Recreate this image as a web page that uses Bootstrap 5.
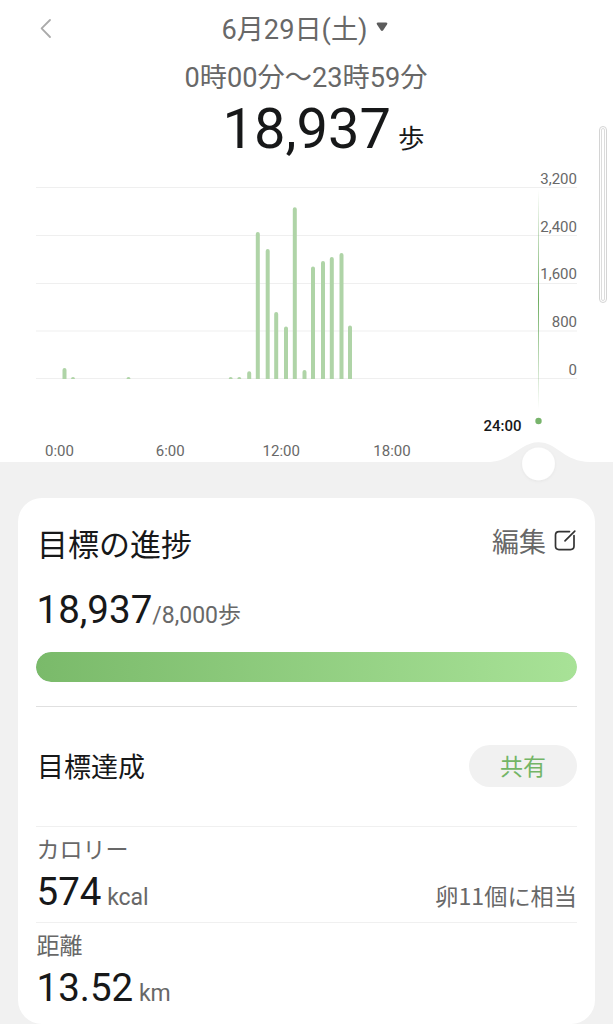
<!DOCTYPE html>
<html lang="ja">
<head>
<meta charset="utf-8">
<meta name="viewport" content="width=device-width, initial-scale=1">
<title>歩数</title>
<link href="https://cdn.jsdelivr.net/npm/bootstrap@5.3.0/dist/css/bootstrap.min.css" rel="stylesheet">
<style>
body{font-family:Roboto,"Noto Sans CJK JP",sans-serif;background:#f1f1f1;color:#171819;height:1024px;overflow:hidden}
.ink-soft{color:#686868}
.date-row{height:58px;font-size:27.2px;line-height:58px;padding-right:4px}
.date-row span{padding-top:1px}
.back-btn{left:39px;top:18px;line-height:0}
.time-row{height:40px;font-size:27.2px;line-height:40px;padding-right:1px}
.total-row{height:62px;font-size:56px;line-height:62px;padding-left:34px}
.total-row .unit{font-size:26.5px;margin-left:7px}
.chart{height:338px}
.chart text{font-size:15px;fill:#686868}
.scroll-thumb{right:6px;top:126px;width:8px;height:177px;border:1px solid #d4d4d4;border-radius:5px;padding:1px}
.scroll-thumb span{border:1px solid #dcdcdc;border-radius:4px}
.goal-card{margin:0 18px;height:526px;border-radius:24px;padding:16px 18px 0}
.goal-title{font-size:31px;line-height:64px;height:62px;padding-left:1px}
.edit-link{font-size:27px;line-height:58px;height:62px}
.goal-steps{font-size:38.5px;line-height:68px;height:68px;padding-left:.5px}
.goal-steps small{font-size:23px}
.goal-bar{height:30px;border-radius:15px;margin-top:8px}
.goal-bar .progress-bar{background:linear-gradient(90deg,#7aba6a,#a8e297);border-radius:15px}
.done-row{margin-top:24px;height:120px;border-top:1px solid #e0e0e0;font-size:27px;padding-bottom:2px}
.done-row span{padding:5px 0 0 1px}
.share-btn{width:108px;height:42px;background:#f1f1f1;color:#73b566;font-size:23px;line-height:45px}
.stat{height:96px;border-top:1px solid #f0f0f0;font-size:23px}
.stat-name{line-height:47px;height:45px;padding-left:.5px}
.stat-value{line-height:40px;height:40px;padding-left:.5px}
.stat-value b{font-size:38.5px;font-weight:400;color:#171819}
.egg{font-family:"Noto Sans CJK JP",sans-serif;font-size:23.2px}
</style>
</head>
<body>
<main class="position-relative d-flex flex-column">
  <header class="bg-white text-center">
    <div class="date-row ink-soft d-flex justify-content-center align-items-center">
      <a class="back-btn position-absolute" href="#" aria-label="戻る"><svg width="14" height="22" viewBox="0 0 14 22" fill="none" stroke="#aaa" stroke-width="1.8" stroke-linecap="round" stroke-linejoin="round"><path d="M11 2 2.6 10.4 11 19"/></svg></a>
      <span>6月29日(土)</span>
      <svg class="ms-2 mb-1" width="12" height="10" viewBox="0 0 12 10"><path d="M2 .5h8Q12 .7 11 2.4L7.2 8.3Q6 9.8 4.8 8.3L1 2.4Q0 .7 2 .5Z" fill="#5c5c5c"/></svg>
    </div>
    <div class="time-row ink-soft">0時00分〜23時59分</div>
    <div class="total-row">18,937<span class="unit">歩</span></div>
  </header>

  <svg class="chart d-block w-100" viewBox="0 160 613 338">
    <defs>
      <linearGradient id="cursor" x1="0" y1="0" x2="0" y2="1"><stop offset="0" stop-color="#6fae62" stop-opacity="0"/><stop offset=".5" stop-color="#6fae62"/><stop offset="1" stop-color="#6fae62" stop-opacity="0"/></linearGradient>
      <clipPath id="plot"><path d="M36 180H577V379H36Z"/></clipPath>
      <filter id="soft" x="-30%" y="-30%" width="160%" height="160%"><feDropShadow dx="0" dy="1" stdDeviation="1.8" flood-opacity=".05"/></filter>
    </defs>
    <path fill="#fff" d="M0 160H613V462H590C564 462 557 442.3 538.5 442.3S512 462 487 462H0Z"/>
    <path stroke="#efefef" d="M36 187.5H577M36 235.5H577M36 283.5H577M36 331H577M36 378.5H577"/>
    <!-- rounded tops, cut flat at the baseline -->
    <g clip-path="url(#plot)" stroke="#afd4a7" stroke-width="4" stroke-linecap="round">
      <path d="M64.5 370V390M73 379V390M128.5 379V390M230.7 379V390M239.3 379V390M249.2 373.3V390M257.8 234V390M267.7 251V390M276.2 314V390M286 328.5V390M294.8 209.3V390M304.5 372V390M313 268.6V390M323 263V390M331.8 259V390M341.5 255V390M350 327.6V390"/>
    </g>
    <path d="M538 190h1V409h-1Z" fill="url(#cursor)"/>
    <g text-anchor="end">
      <text x="577" y="184">3,200</text><text x="577" y="232">2,400</text><text x="577" y="279.4">1,600</text><text x="577" y="327.4">800</text><text x="577" y="375">0</text>
    </g>
    <g text-anchor="middle">
      <text x="59.5" y="455.5">0:00</text><text x="170.2" y="455.5">6:00</text><text x="281.2" y="455.5">12:00</text><text x="392" y="455.5">18:00</text>
      <text x="502.5" y="431" style="fill:#171819;font-weight:500">24:00</text>
    </g>
    <circle cx="538.5" cy="421" r="3.2" fill="#78b46c"/>
    <circle cx="538.5" cy="463.8" r="16.4" fill="#fff" filter="url(#soft)"/>
  </svg>

  <section class="goal-card bg-white">
    <div class="d-flex justify-content-between">
      <div class="goal-title">目標の進捗</div>
      <a class="edit-link ink-soft text-decoration-none d-flex" href="#">編集
        <svg class="ms-2" style="margin-top:15px" width="23" height="23" viewBox="0 0 23 23" fill="none" stroke="#333" stroke-width="1.7" stroke-linecap="round"><path d="M15.5 2.6H5Q1.5 2.6 1.5 6.1V17.1Q1.5 20.6 5 20.6H16.5Q20 20.6 20 17.1V6.6M11 11.8 20.8 2.2"/></svg>
      </a>
    </div>
    <div class="goal-steps">18,937<small class="ink-soft">/8,000歩</small></div>
    <div class="progress goal-bar"><div class="progress-bar w-100"></div></div>
    <div class="done-row d-flex justify-content-between align-items-center">
      <span>目標達成</span>
      <button class="share-btn btn rounded-pill border-0 p-0">共有</button>
    </div>
    <div class="stat ink-soft">
      <div class="stat-name">カロリー</div>
      <div class="stat-value d-flex justify-content-between align-items-baseline"><span><b>574</b> kcal</span><span class="egg">卵11個に相当</span></div>
    </div>
    <div class="stat ink-soft">
      <div class="stat-name">距離</div>
      <div class="stat-value"><b>13.52</b> km</div>
    </div>
  </section>
  <div class="scroll-thumb position-absolute d-flex"><span class="flex-fill"></span></div>
</main>
<script src="https://cdn.jsdelivr.net/npm/bootstrap@5.3.0/dist/js/bootstrap.bundle.min.js"></script>
</body>
</html>
